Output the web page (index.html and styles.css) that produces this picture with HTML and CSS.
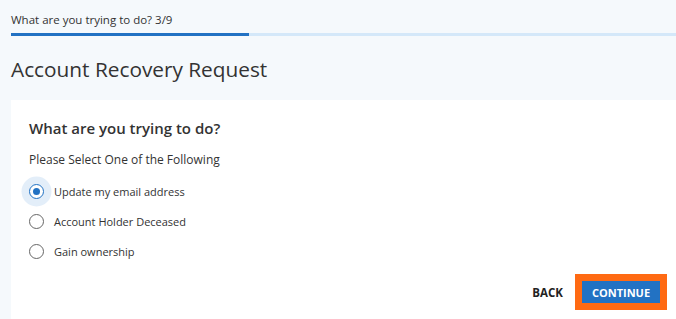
FILE: index.html
```html
<!DOCTYPE html>
<html>
<head>
<meta charset="utf-8">
<link rel="stylesheet" href="styles.css">
</head>
<body>
<div class="page">
  <div class="step">What are you trying to do? 3/9</div>
  <div class="progress"><div class="fill"></div></div>
  <h1 class="title">Account Recovery Request</h1>
  <div class="card">
    <h2 class="question">What are you trying to do?</h2>
    <p class="sub">Please Select One of the Following</p>
    <div class="options">
      <label class="option">
        <span class="radio checked"></span>
        <span class="label">Update my email address</span>
      </label>
      <label class="option">
        <span class="radio"></span>
        <span class="label">Account Holder Deceased</span>
      </label>
      <label class="option">
        <span class="radio"></span>
        <span class="label">Gain ownership</span>
      </label>
    </div>
    <div class="actions">
      <button class="back">BACK</button>
      <span class="focus"><button class="continue">CONTINUE</button></span>
    </div>
  </div>
</div>
</body>
</html>
```
FILE: styles.css
```css
* { box-sizing: border-box; }
html, body { margin: 0; padding: 0; }
body {
  background: #f5f9fc;
  font-family: "Open Sans", "Noto Sans", sans-serif;
  color: #333;
  width: 676px;
  height: 319px;
  overflow: hidden;
}
.page {
  padding-left: 11px;
}
.step {
  font-size: 11.5px;
  color: #333;
  padding-top: 12px;
  height: 33px;
  line-height: 16px;
}
.progress {
  height: 3px;
  background: #d4e8f9;
}
.progress .fill {
  width: 238px;
  height: 3px;
  background: #2272c3;
}
.title {
  margin: 0;
  font-weight: 400;
  font-size: 20.8px;
  line-height: 30px;
  padding-top: 18px;
  height: 64px;
  color: #333;
}
.card {
  background: #fff;
  height: 219px;
  padding: 17px 0 0 18px;
}
.question {
  margin: 0;
  font-size: 15px;
  font-weight: 600;
  line-height: 22px;
  color: #333;
}
.sub {
  margin: 12px 0 0;
  font-size: 12px;
  line-height: 18px;
  color: #333;
}
.options {
  margin-top: 7px;
  display: flex;
  flex-direction: column;
}
.option {
  display: flex;
  align-items: center;
  height: 30px;
  font-size: 11px;
}
.radio {
  position: relative;
  width: 15px;
  height: 15px;
  border: 1px solid #666;
  border-radius: 50%;
  margin-right: 10px;
  flex: none;
  background: #fff;
}
.radio.checked {
  border: 1.5px solid #2272c3;
  box-shadow: 0 0 0 7.5px #e3eef9;
}
.radio.checked::after {
  content: "";
  position: absolute;
  left: 50%;
  top: 50%;
  width: 7px;
  height: 7px;
  margin: -3.5px 0 0 -3.5px;
  border-radius: 50%;
  background: #2272c3;
}
.label { color: #333; }
.actions {
  display: flex;
  justify-content: flex-end;
  align-items: center;
  margin-top: 8px;
  padding-right: 9px;
}
.back {
  background: none;
  border: none;
  font-family: inherit;
  font-weight: 700;
  font-size: 11.5px;
  color: #222;
  padding: 0;
  margin-right: 12px;
}
.focus {
  display: block;
  border: 7px solid #ff6a13;
}
.continue {
  display: block;
  width: 78px;
  height: 22px;
  background: #2272c3;
  border: none;
  color: #fff;
  font-family: inherit;
  font-weight: 700;
  font-size: 11px;
  padding: 0;
}
```
